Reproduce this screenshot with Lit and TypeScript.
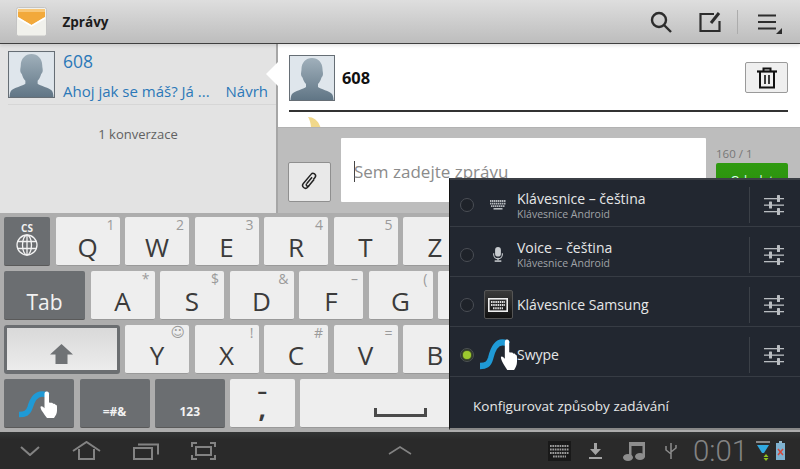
import { LitElement, html, css } from "lit";
import { customElement } from "lit/decorators.js";

const avatar = (s: number) => html`<svg class="avatar" width=${s} height=${s} viewBox="0 0 46 46">
  <defs><linearGradient id="sil" x1="0" y1="0" x2="0" y2="1"><stop offset="0" stop-color="#a0b0bb"/><stop offset="1" stop-color="#5f7484"/></linearGradient></defs>
  <rect width="46" height="46" fill="#dfe6ec"/>
  <path fill="url(#sil)" d="M23 3c6 0 10.500 4.500 10.500 11 0 2 .5 3 .5 5 0 2-1 3-1.500 3.500-.8 3-2 5-3.500 6.500v3c2 2 12 4 14 7 1 1.500 1.500 4 1.500 7h-43c0-3 .5-5.500 1.500-7 2-3 12-5 14-7v-3c-1.500-1.500-2.700-3.500-3.500-6.500-.5-.5-1.500-1.500-1.500-3.500 0-2 .5-3 .5-5C12.500 7.500 17 3 23 3z"/>
  <rect x=".5" y=".5" width="45" height="45" fill="none" stroke="#666e75"/>
</svg>`;

const slider = html`<svg class="slider" width="20" height="20" viewBox="0 0 20 20" fill="#b9bdc1">
  <rect y="3" width="20" height="1.300"/><rect x="13" y="0" width="3" height="7" rx=".6"/>
  <rect y="9.500" width="20" height="1.300"/><rect x="5" y="6.500" width="3" height="7" rx=".6"/>
  <rect y="16" width="20" height="1.300"/><rect x="13" y="13" width="3" height="7" rx=".6"/>
</svg>`;

const swype = (w: number, h: number) => html`<svg width=${w} height=${h} viewBox="0 0 38 27" preserveAspectRatio="none">
  <path d="M0 23.500c6 0 9-1 11-7 2-7 5-13.500 12-13.500 3 0 5 .5 6 1.500" fill="none" stroke="#1f9ad6" stroke-width="5.500"/>
  <path fill="#fff" d="M28 .5c1.300 0 2 1 2 2.500v8.500l1.500.3c1.500-.3 2.300.2 2.700 1 1-.3 2 .3 2.300 1 1-.2 1.500.7 1.500 2v4c0 3-1.500 5-3 7.200h-7c-1.500-2-3-4-5-7-1-1.500-1.500-3-1.500-4 0-1 1.300-1 2.500-.2l1.500 1.500V3c0-1.500.7-2.500 2-2.500z"/>
</svg>`;

const imeIcons = {
  kb: html`<svg width="16" height="10" viewBox="0 0 16 10"><path d="M0 1h16M0 3.600h16M1 6.200h14" stroke="#b4b8bc" stroke-width="1.800" stroke-dasharray="1.500 .5"/><rect x="3.500" y="8" width="9" height="1.600" fill="#b4b8bc"/></svg>`,
  mic: html`<svg width="10" height="15" viewBox="0 0 12 18" fill="#c8ccd0"><rect x="2.500" y="0" width="7" height="11.500" rx="3.500"/><path d="M.8 7.500v1.500a5.200 5.200 0 0 0 10.400 0V7.500" fill="none" stroke="#c8ccd0" stroke-width="1.300"/><rect x="5.200" y="13" width="1.600" height="3"/><rect x="2" y="16" width="8" height="1.800"/></svg>`,
  sam: html`<span class="samsung"><svg width="20" height="14" viewBox="0 0 20 14"><rect x=".8" y=".8" width="18.400" height="12.400" fill="none" stroke="#eee" stroke-width="1.600"/><path d="M3 4h14M3 7h14M5 10.200h10" stroke="#ddd" stroke-width="2" stroke-dasharray="1.500 .7"/></svg></span>`,
  swype: swype(37, 31),
};

type Key = { l?: string; h?: string; w: number; k?: string };
const rows: Key[][] = [
  [{ k: "lang", w: 46 }, { l: "Q", h: "1", w: 64 }, { l: "W", h: "2", w: 64 }, { l: "E", h: "3", w: 64 }, { l: "R", h: "4", w: 64 }, { l: "T", h: "5", w: 64 }, { l: "Z", h: "6", w: 64 }],
  [{ k: "tab", l: "Tab", w: 81 }, { l: "A", h: "*", w: 64 }, { l: "S", h: "$", w: 64 }, { l: "D", h: "&", w: 64 }, { l: "F", h: "–", w: 64 }, { l: "G", h: "(", w: 64 }, { l: "H", h: ")", w: 64 }],
  [{ k: "shift", w: 115.5 }, { l: "Y", k: "smile", w: 64 }, { l: "X", h: "!", w: 64 }, { l: "C", h: "#", w: 64 }, { l: "V", h: "=", w: 64 }, { l: "B", h: "/", w: 64 }],
  [{ k: "swype", w: 70 }, { k: "sym", l: "=#&", w: 70 }, { k: "sym", l: "123", w: 69.5 }, { k: "comma", w: 64.5 }, { k: "space", w: 300 }],
];

const imes = [
  { t: "Klávesnice – čeština", s: "Klávesnice Android", i: imeIcons.kb },
  { t: "Voice – čeština", s: "Klávesnice Android", i: imeIcons.mic },
  { t: "Klávesnice Samsung", s: "", i: imeIcons.sam },
  { t: "Swype", s: "", i: imeIcons.swype, on: true },
];

@customElement("app-root")
export class AppRoot extends LitElement {
  static styles = css`
    :host { display: block; width: 800px; height: 469px; overflow: hidden; position: relative;
      font-family: "Open Sans", "Noto Sans", sans-serif; background: #bbb; }
    svg { display: block; flex: none; }
    .bar { height: 43px; border-bottom: 1px solid #3f3f3f; display: flex; align-items: center; box-sizing: content-box; position: relative; z-index: 1;
      background: linear-gradient(#dedede, #bdbdbd); box-shadow: 0 2px 3px rgba(0,0,0,.1); }
    .mail { margin-left: 16px; }
    .title { margin-left: 15.500px; font-size: 13.500px; font-weight: 700; color: #1c1c1c; }
    .actions { margin-left: auto; display: flex; align-items: center; }
    .search { margin-right: 27px; }
    .compose { margin-right: 14px; }
    .vsep { width: 1px; height: 24px; background: #acacac; margin-right: 20px; }
    .menu { margin-right: 18px; }

    .main { height: 169px; display: flex; }
    .list { width: 276px; flex: none; background: #e3e3e3; border-right: 2px solid #a6a6a6; box-sizing: content-box; position: relative;
      display: flex; flex-direction: column; }
    .item { display: flex; margin-left: 8px; padding-top: 7px; height: 53px; border-bottom: 1px solid #d6d6d6; box-sizing: content-box; }
    .item .body { margin-left: 8px; flex: 1; }
    .num { font-size: 17.500px; line-height: 24px; color: #2b78b8; margin-top: -2px; }
    .prev { display: flex; justify-content: space-between; font-size: 15px; line-height: 20px; margin-top: 8px; color: #2b78b8; padding-right: 8px; white-space: nowrap; }
    .count { text-align: center; font-size: 13px; font-weight: 500; color: #616161; margin-top: 20px; }
    .notch { position: absolute; right: -2px; top: 18px; width: 0; height: 0; border: 12px solid transparent; border-left: 0; border-right-color: #fff; }

    .conv { flex: 1; display: flex; flex-direction: column; min-width: 0; }
    .head { height: 83px; background: #fff; padding: 11px 12px 0 11px; box-sizing: border-box; position: relative; overflow: hidden; }
    .headrow { display: flex; align-items: center; height: 45px; }
    .who { margin-left: 7px; font-size: 16.400px; font-weight: 700; color: #111; }
    .del { margin-left: auto; width: 43px; height: 31px; background: #efefef; border: 1px solid #9a9a9a; border-radius: 2px; box-sizing: border-box;
      display: flex; align-items: center; justify-content: center; }
    .rule { height: 2px; background: #333; margin-top: 10px; }
    .smile { margin: 5px 0 0 17px; }
    .compose-row { flex: 1; background: #bdbdbd; border-top: 1px solid #b2b2b2; display: flex; padding: 10px 12px 0 10px; box-sizing: border-box; }
    .clip { width: 43px; height: 40px; margin-top: 24px; background: #e9e9e9; border: 1px solid #8f8f8f; border-radius: 2px; box-sizing: border-box;
      display: flex; align-items: center; justify-content: center; }
    .input { width: 365px; height: 64px; margin-left: 10px; background: #fff; border-radius: 1px; display: flex; align-items: center; padding-left: 13px; box-sizing: border-box;
      font-size: 17px; color: #8b8b8b; padding-top: 2px; }
    .caret { width: 1px; height: 21px; background: #444; margin-right: -1px; }
    .send { margin-left: 10px; flex: 1; }
    .cnt { font-size: 11.500px; color: #777; line-height: 14px; margin-top: 9px; }
    .green { height: 40px; margin-top: 2px; background: linear-gradient(#2f9a10, #2a8a0c); border-radius: 2px; text-align: center; color: #dfe; font-size: 12px; padding-top: 9px; box-sizing: border-box; }

    .kbd { height: 219px; background: #adadad; padding: 4px 0 0 4px; box-sizing: border-box; display: flex; flex-direction: column; gap: 5px; overflow: hidden; }
    .row { display: flex; gap: 5.500px; height: 49px; flex: none; }
    .key { position: relative; flex: none; height: 49px; background: #eeeeee; border-radius: 2px; box-sizing: border-box; border-bottom: 1px solid #999;
      color: #3b3b3b; display: flex; align-items: flex-end; justify-content: center; font-size: 26px; line-height: 34px; padding-bottom: 1px; }
    .hint { position: absolute; right: 5px; top: -1px; font-size: 14px; line-height: 18px; color: #9b9b9b; }
    .smiley { right: 4px; top: -2px; font-family: "DejaVu Sans", sans-serif; font-size: 14px; }
    .dark { background: #6b6e71; color: #f2f2f2; border-bottom-color: #5a5a5a; }
    .tab { font-size: 21px; font-weight: 400; padding-bottom: 0; }
    .lang { flex-direction: column; align-items: center; justify-content: flex-start; padding-top: 6px; }
    .lang b { font-size: 10px; line-height: 10px; margin-bottom: 1px; }
    .shift { background: linear-gradient(#d9d9d9, #ececec); border: 3px solid #6b6e71; border-bottom-width: 4px; border-radius: 3px; padding-bottom: 6px; }
    .sym { font-size: 12px; font-weight: 700; line-height: 16px; padding-bottom: 7px; }
    .swypekey { align-items: center; padding: 3px 2px 0 0; }
    .comma { flex-direction: column; align-items: center; justify-content: flex-start; font-weight: 700; padding: 0; }
    .dash { font-size: 19px; line-height: 22px; height: 22px; margin-top: 1px; }
    .cm { font-size: 26px; line-height: 24px; height: 24px; margin-top: -6px; }
    .space { align-items: flex-end; justify-content: flex-start; padding: 0 0 10px 74px; }

    .nav { height: 37px; background: linear-gradient(#333535, #2a2a2a 20%); display: flex; align-items: center; padding-left: 20px; box-sizing: border-box; }
    .nav .g { margin-right: 32px; }
    .chev { margin-left: 172px; }
    .status { margin-left: auto; display: flex; align-items: center; padding-right: 15px; }
    .clock { font-family: "Roboto", sans-serif; font-weight: 300; font-size: 29.400px; color: #838383; line-height: 32px; margin: 0 8px 0 15px; }

    .popup { position: absolute; z-index: 2; left: 449px; top: 178px; width: 351px; height: 252px; background: #222730; border: 1px solid #141414; border-bottom: 2px solid #888; border-right: 0; box-sizing: border-box; border-top: 2px solid #3b3f45;
      color: #e6e7e8; display: flex; flex-direction: column; }
    .ime { height: 50px; padding-top: 6px; display: flex; align-items: center; border-bottom: 1px solid #373c44; box-sizing: border-box; flex: none; }
    .ime:first-child { height: 47px; padding-top: 4px; }
    .radio { width: 14px; height: 14px; border-radius: 50%; border: 1px solid #4a4e55; box-sizing: border-box; margin-left: 10px; flex: none; background: #1e2229; display: flex; align-items: center; justify-content: center; }
    .radio i { width: 8px; height: 8px; border-radius: 50%; background: #9dc92e; box-shadow: 0 0 3px #9dc92e; }
    .slot { width: 43px; flex: none; display: flex; align-items: center; justify-content: center; padding-left: 5px; box-sizing: border-box; }
    .samsung { width: 29px; height: 29px; flex: none; border: 1px solid #555; border-radius: 2px; background: linear-gradient(#3a3a3a, #111); display: flex; align-items: center; justify-content: center; box-sizing: border-box; }
    .texts { flex: 1; min-width: 0; }
    .t { font-size: 14px; line-height: 17px; font-weight: 400; }
    .s { font-size: 10.500px; line-height: 13px; color: #a0a3a7; font-weight: 400; margin-top: 1px; }
    .div { width: 1px; height: 36px; background: #3b4047; flex: none; }
    .slider { margin: 0 16px 0 14px; }
    .foot { padding: 20px 0 0 23px; font-size: 13.500px; font-weight: 500; color: #e6e7e8; line-height: 18px; }
  `;

  key(k: Key) {
    const w = `width:${k.w}px`;
    switch (k.k) {
      case "lang":
        return html`<div class="key dark lang" style=${w}><b>CS</b>
          <svg width="22" height="22" viewBox="0 0 22 22" fill="none" stroke="#f2f2f2" stroke-width="1.300"><circle cx="11" cy="11" r="10"/><ellipse cx="11" cy="11" rx="4.500" ry="10"/><path d="M11 1v20M1.500 7.500h19M1.500 14.500h19"/></svg></div>`;
      case "tab":
        return html`<div class="key dark tab" style=${w}>${k.l}</div>`;
      case "shift":
        return html`<div class="key shift" style=${w}><svg width="23" height="20" viewBox="0 0 23 20" fill="#6f7275"><path d="M11.500 0 23 10.500h-5.500V20h-12V10.500H0z"/></svg></div>`;
      case "swype":
        return html`<div class="key dark swypekey" style=${w}>${swype(38, 27)}</div>`;
      case "sym":
        return html`<div class="key dark sym" style=${w}>${k.l}</div>`;
      case "comma":
        return html`<div class="key comma" style=${w}><span class="dash">–</span><span class="cm">,</span></div>`;
      case "space":
        return html`<div class="key space" style=${w}><svg width="53" height="9" viewBox="0 0 53 9" fill="#4a4a4a"><path d="M0 0h3v6h47V0h3v9H0z"/></svg></div>`;
      case "smile":
        return html`<div class="key" style=${w}>${k.l}<span class="hint smiley">☺</span></div>`;
      default:
        return html`<div class="key" style=${w}>${k.l}<span class="hint">${k.h}</span></div>`;
    }
  }

  render() {
    return html`
      <div class="bar">
        <svg class="mail" width="31" height="30" viewBox="0 0 31 30">
          <rect x=".5" y=".5" width="30" height="28.500" rx="2" fill="#f1f1ec" stroke="#c4c4c4"/>
          <path d="M2 2h27v8L15.500 18 2 10z" fill="#f2a93b"/>
          <path d="M2 2h27v3H2z" fill="#f8c777"/>
          <path d="M2 11l13.500 8L29 11" fill="none" stroke="#fff" stroke-width="1.500"/>
        </svg>
        <span class="title">Zprávy</span>
        <div class="actions">
          <svg class="search" width="22" height="22" viewBox="0 0 22 22" fill="none" stroke="#2d2d2d" stroke-width="2.400"><circle cx="9" cy="9" r="7"/><path d="M14 14l7 7"/></svg>
          <svg class="compose" width="24" height="22" viewBox="0 0 24 22" fill="none" stroke="#2d2d2d" stroke-width="2.200"><path d="M15 3H1.500v17h19V10"/><path d="M12 12l8-10" stroke-width="3"/></svg>
          <div class="vsep"></div>
          <svg class="menu" width="24" height="24" viewBox="0 0 24 24" fill="#2d2d2d"><rect y="4.500" width="18" height="2"/><rect y="11" width="18" height="2"/><rect y="17.500" width="18" height="2"/><path d="M24 18v6h-6z"/></svg>
        </div>
      </div>

      <div class="main">
        <div class="list">
          <div class="item">
            ${avatar(47)}
            <div class="body">
              <div class="num">608</div>
              <div class="prev"><span>Ahoj jak se máš? Já ...</span><span>Návrh</span></div>
            </div>
          </div>
          <div class="count">1 konverzace</div>
          <div class="notch"></div>
        </div>
        <div class="conv">
          <div class="head">
            <div class="headrow">
              ${avatar(46)}
              <span class="who">608</span>
              <div class="del"><svg width="20" height="22" viewBox="0 0 20 22" fill="none" stroke="#111" stroke-width="2"><path d="M0 4.500h20" stroke-width="2.200"/><path d="M6.500 4V1.500h7V4"/><path d="M3 5v15.500h14V5"/><path d="M8 8v9M12 8v9" stroke-width="1.600"/></svg></div>
            </div>
            <div class="rule"></div>
            <svg class="smile" width="16" height="12" viewBox="0 0 16 12"><path d="M2 0c6 0 11 4 13 12H5C5 7 4 3 2 0z" fill="#f1d88a"/></svg>
          </div>
          <div class="compose-row">
            <div class="clip"><svg width="20" height="20" viewBox="0 0 20 20" fill="none" stroke="#222" stroke-width="1.500"><g transform="rotate(40 10 10)"><path d="M11.500 5.500v10a2.800 2.800 0 0 1-5.600 0V3.500a2.500 2.500 0 0 1 5-.2 M8.500 5v8.500"/><path d="M11 3v3M8.500 13.500a1.500 1.500 0 0 0 3 0"/></g></svg></div>
            <div class="input"><span class="caret"></span><span>Sem zadejte zprávu</span></div>
            <div class="send"><div class="cnt">160 / 1</div><div class="green">Odeslat</div></div>
          </div>
        </div>
      </div>

      <div class="kbd">
        ${rows.map((r) => html`<div class="row">${r.map((k) => this.key(k))}</div>`)}
      </div>

      <div class="nav">
        <svg class="g" width="20" height="10" viewBox="0 0 20 10" fill="none" stroke="#838383" stroke-width="2"><path d="M1 1l9 8 9-8"/></svg>
        <svg class="g" width="29" height="19" viewBox="0 0 29 19" fill="none" stroke="#838383" stroke-width="2"><path d="M1 10 14.500 1 28 10M7 8v10h15V8"/></svg>
        <svg class="g" width="26" height="18" viewBox="0 0 26 18" fill="none" stroke="#838383" stroke-width="2"><rect x="1" y="6" width="18" height="11"/><path d="M5 2.500h20v10"/></svg>
        <svg width="25" height="18" viewBox="0 0 25 18" fill="none" stroke="#838383" stroke-width="2"><rect x="5" y="5" width="15" height="8"/><path d="M1 5V1h5M19 1h5v4M1 13v4h5M19 17h5v-4"/></svg>
        <svg class="chev" width="24" height="9" viewBox="0 0 24 9" fill="none" stroke="#838383" stroke-width="1.500"><path d="M1 8 12 1l11 7"/></svg>
        <div class="status">
          <svg width="23" height="20" viewBox="0 0 23 20"><rect width="23" height="20" fill="#191919"/><path d="M2 5h19M2 8.500h19M2 12h19M5 15.500h13" stroke="#9a9a9a" stroke-width="2.200" stroke-dasharray="1.700 .7"/></svg>
          <svg style="margin-left:18px" width="13" height="16" viewBox="0 0 13 16" fill="#a3a3a3"><path d="M5 0h3v6h4L6.500 12 1 6h4zM0 14h13v2H0z"/></svg>
          <svg style="margin-left:21px" width="22" height="21" viewBox="0 0 22 21" fill="#8d8d8d"><path d="M6 2h16v15h-2.500V6H8.500v12H6z"/><ellipse cx="5" cy="17.500" rx="5" ry="3.500"/><ellipse cx="17" cy="16.500" rx="5" ry="3.500"/></svg>
          <svg style="margin-left:19px" width="14" height="18" viewBox="0 0 14 18" fill="none" stroke="#8d8d8d" stroke-width="1.500"><path d="M7 1v16M2 4v4l5 4M12 3v3L7 10"/></svg>
          <span class="clock">0:01</span>
          <svg width="14" height="21" viewBox="0 0 14 21"><path d="M0 1h14v2H0z" fill="#888"/><path d="M1 5h12L8 13H6z" fill="#31a9e0"/><path d="M10 14l2.500 3h-5zM10 21l2.500-3h-5z" fill="#8fc31f"/></svg>
          <svg style="margin-left:6px" width="9" height="19" viewBox="0 0 9 19"><rect x="3" width="3" height="2" fill="#9bc"/><rect y="2" width="9" height="17" fill="#7fb2d0"/><path d="M2 8l5 6M7 8l-5 6" stroke="#d4483a" stroke-width="1.500"/></svg>
        </div>
      </div>

      <div class="popup">
        ${imes.map((m) => html`<div class="ime">
          <span class="radio">${m.on ? html`<i></i>` : ""}</span>
          <span class="slot">${m.i}</span>
          <div class="texts"><div class="t">${m.t}</div>${m.s ? html`<div class="s">${m.s}</div>` : ""}</div>
          <span class="div"></span>${slider}
        </div>`)}
        <div class="foot">Konfigurovat způsoby zadávání</div>
      </div>
    `;
  }
}
